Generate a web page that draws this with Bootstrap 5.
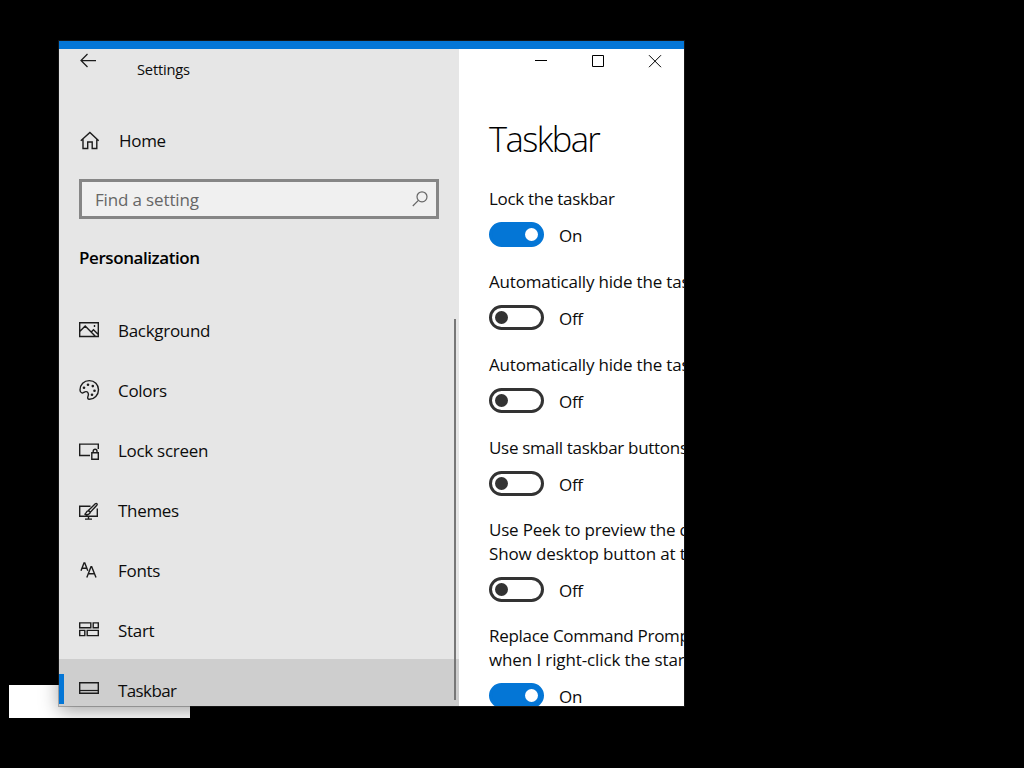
<!DOCTYPE html>
<html lang="en">
<head>
<meta charset="utf-8">
<meta name="viewport" content="width=device-width, initial-scale=1">
<title>Settings</title>
<link rel="stylesheet" href="https://cdn.jsdelivr.net/npm/bootstrap@5.3.0/dist/css/bootstrap.min.css">
<style>
  body { background: #000; color: #0c0c0c; font-family: "Open Sans", sans-serif; font-size: 17px; line-height: 24px; letter-spacing: -.3px; height: 768px; }
  svg { display: block; flex: none; overflow: visible; fill: none; stroke: #1c1c1c; stroke-width: 1.4; }
  .backdrop { left: 9px; top: 685px; width: 181px; height: 33px; background: #fff; }
  .app-window { left: 59px; top: 41px; width: 625px; height: 665px; border-top: 8px solid #0476d6; box-shadow: 0 0 0 1px rgba(60,60,60,.35), 0 5px 18px rgba(0,0,0,.36); background: #fff; }
  .side { width: 400px; background: #e6e6e6; }
  .side > * { flex-shrink: 0; }
  .title-row { height: 42px; padding: 0 0 0 21px; font-size: 14.7px; letter-spacing: -.2px; }
  .title-row span { margin-left: 41px; padding-top: 8px; }
  .title-row svg { margin-top: 4px; stroke-width: 1.25; }
  .home-row { height: 40px; margin-top: 30px; padding-left: 20px; gap: 18px; }
  .search-box { margin: 18px 20px 0; height: 40px; border: 3px solid #868686; background: #f0f0f0; color: #666; padding: 0 8px 0 13px; letter-spacing: -.15px; }
  .search-box span { padding-top: 2px; }
  .search-box svg { stroke: #666; stroke-width: 1.2; }
  .side h2 { margin: 27px 0 0 20px; font-size: 17px; line-height: 24px; font-weight: 600; letter-spacing: -.42px; color: #000; }
  .menu { margin-top: 29px; }
  .menu-row { height: 60px; padding-left: 20px; gap: 18px; flex: none; }
  .menu-row span { padding-top: 4px; }
  .menu-row.current { background: #cecece; }
  .menu-row.current span { letter-spacing: -.6px; }
  .marker { left: 0; top: 15px; width: 5px; height: 30px; background: #0476d6; }
  .scroll-thumb { left: 395px; top: 270px; width: 2px; height: 381px; background: #777; }
  .page-body { padding-left: 30px; white-space: nowrap; }
  .captions { height: 26px; padding: 6px 22px 0 0; gap: 43px; }
  .captions svg { stroke: #000; stroke-width: 1; }
  .page-body h1 { margin: 40px 0 0; height: 48px; line-height: 48px; font-size: 34.5px; font-weight: 300; letter-spacing: -1.6px; color: #000; }
  .options { margin-top: 24px; }
  .option { margin-bottom: 23px; }
  .option.tight { margin-bottom: 22px; }
  .loose { letter-spacing: -.19px; }
  .looser { letter-spacing: -.12px; }
  .switch-row { margin-top: 11px; height: 25px; gap: 15px; }
  .switch-row span { padding-top: 3px; }
  .pill { width: 55px; height: 25px; border: 3px solid #333; padding: 0 3px; flex: none; }
  .pill i { width: 13px; height: 13px; background: #333; border-radius: 50%; }
  .pill.on { background: #0476d6; border-color: #0476d6; justify-content: flex-end; }
  .pill.on i { background: #fff; }
</style>
<script src="https://cdn.jsdelivr.net/npm/bootstrap@5.3.0/dist/js/bootstrap.bundle.min.js"></script>
</head>
<body class="position-relative overflow-hidden m-0">
<div class="backdrop position-absolute"></div>
<div class="app-window position-absolute d-flex overflow-hidden">
  <aside class="side d-flex flex-column flex-shrink-0 overflow-hidden">
    <div class="title-row d-flex align-items-start">
      <svg width="16" height="16" viewBox="0 0 16 16"><path d="M16 7.5H1M7.5 1 1 7.5 7.5 14"/></svg>
      <span>Settings</span>
    </div>
    <div class="home-row d-flex align-items-center">
      <svg width="22" height="22" viewBox="0 0 22 22"><path d="M1.8 10.8 10.9 2.4 19.7 10.8M4 9V18.5H8.7V12H13.2V18.5H17.8V9"/></svg>
      <span>Home</span>
    </div>
    <div class="search-box d-flex align-items-center justify-content-between">
      <span>Find a setting</span>
      <svg width="16" height="16" viewBox="0 0 16 16"><circle cx="10" cy="5.8" r="5"/><path d="M6.4 9.4.8 15"/></svg>
    </div>
    <h2>Personalization</h2>
    <nav class="menu d-flex flex-column">
      <div class="menu-row d-flex align-items-center">
        <svg width="21" height="22" viewBox="0 0 21 22"><path d="M.7 4.7H19.3V18.5H.7ZM1 13.2 6.2 8 16.3 18.2M12 14.3 14.5 11.8 19 16.3"/><path d="M15.5 7v2"/></svg>
        <span>Background</span>
      </div>
      <div class="menu-row d-flex align-items-center">
        <svg width="21" height="22" viewBox="0 0 21 22"><g transform="translate(0 .8)"><path d="M1 11.3C1 5.8 5 1.8 10.3 1.8S19.5 5.8 19.5 11 15.3 20.5 10.5 20.5C8.4 20.5 8.4 18.8 9.1 17.2 9.9 15.4 9.2 13 7.2 12.8 5.2 12.6 4.4 14.5 2.8 14.1 1.5 13.8 1 12.6 1 11.3Z"/><g fill="#1c1c1c" stroke="none"><circle cx="5" cy="9" r="1.3"/><circle cx="9" cy="6" r="1.3"/><circle cx="13.8" cy="7.3" r="1.3"/><circle cx="15.5" cy="12" r="1.3"/><circle cx="13" cy="16" r="1.3"/></g></g></svg>
        <span>Colors</span>
      </div>
      <div class="menu-row d-flex align-items-center">
        <svg width="21" height="22" viewBox="0 0 21 22"><path d="M11 17.5H.7V6.1H19.3V11M12.8 14.8H19.3V21.2H12.8ZM14.2 14.8V13.2a1.9 1.9 0 0 1 3.8 0V14.8"/></svg>
        <span>Lock screen</span>
      </div>
      <div class="menu-row d-flex align-items-center">
        <svg width="21" height="22" viewBox="0 0 21 22"><g transform="translate(0 1.6)"><path d="M11.5 6.7H.7V16.6H18.3V9M9.5 16.6V19.4M6 19.5H13M5.5 14.6C7.5 14.5 7 11.5 9 11.3 11 11.3 11.6 13 10.6 14 9.4 15.2 7 15.2 5.5 14.6ZM9.3 11 16.3 4.2C17.6 3.2 18.7 4.3 17.8 5.6L11.2 12.8"/></g></svg>
        <span>Themes</span>
      </div>
      <div class="menu-row d-flex align-items-center">
        <svg width="21" height="22" viewBox="0 0 21 22"><path d="M2 12.8 5 5H5.8L8.8 12.8M3.1 10.2H7.5M7.8 19.5 12 8.8H12.7L17 19.5M9.5 15.8H15.4"/></svg>
        <span>Fonts</span>
      </div>
      <div class="menu-row d-flex align-items-center">
        <svg width="21" height="22" viewBox="0 0 21 22"><path d="M.7 4.9H11.8V9.8H.7ZM14.2 4.9H19.3V9.8H14.2ZM.7 12.4H5.8V17.6H.7ZM8.2 12.4H19.3V17.6H8.2Z"/></svg>
        <span>Start</span>
      </div>
      <div class="menu-row current position-relative d-flex align-items-center">
        <div class="marker position-absolute"></div>
        <svg width="21" height="22" viewBox="0 0 21 22"><path d="M.7 4.7H19.3V15.3H.7Z"/><path d="M1 12.5H19" stroke-width="1.2"/></svg>
        <span>Taskbar</span>
      </div>
    </nav>
  </aside>
  <div class="scroll-thumb position-absolute"></div>
  <main class="page-body flex-grow-1 overflow-hidden">
    <div class="captions d-flex justify-content-end">
      <svg width="14" height="14" viewBox="0 0 14 14"><path d="M1 5.5H13"/></svg>
      <svg width="14" height="14" viewBox="0 0 14 14"><path d="M1.5.5H12.5V11.5H1.5Z"/></svg>
      <svg width="14" height="14" viewBox="0 0 14 14"><path d="M1 .2 13 12.2M13 .2 1 12.2"/></svg>
    </div>
    <h1>Taskbar</h1>
    <div class="options">
      <div class="option"><div>Lock the taskbar</div><div class="switch-row d-flex align-items-center"><div class="pill on rounded-pill d-flex align-items-center"><i></i></div><span>On</span></div></div>
      <div class="option"><div class="loose">Automatically hide the taskbar in desktop mode</div><div class="switch-row d-flex align-items-center"><div class="pill rounded-pill d-flex align-items-center"><i></i></div><span>Off</span></div></div>
      <div class="option"><div class="loose">Automatically hide the taskbar in tablet mode</div><div class="switch-row d-flex align-items-center"><div class="pill rounded-pill d-flex align-items-center"><i></i></div><span>Off</span></div></div>
      <div class="option tight"><div>Use small taskbar buttons</div><div class="switch-row d-flex align-items-center"><div class="pill rounded-pill d-flex align-items-center"><i></i></div><span>Off</span></div></div>
      <div class="option tight"><div class="loose">Use Peek to preview the desktop<br><span class="looser">Show desktop button at the end</span></div><div class="switch-row d-flex align-items-center"><div class="pill rounded-pill d-flex align-items-center"><i></i></div><span>Off</span></div></div>
      <div class="option"><div>Replace Command Prompt<br><span class="looser">when I right-click the start button</span></div><div class="switch-row d-flex align-items-center"><div class="pill on rounded-pill d-flex align-items-center"><i></i></div><span>On</span></div></div>
    </div>
  </main>
</div>
</body>
</html>
